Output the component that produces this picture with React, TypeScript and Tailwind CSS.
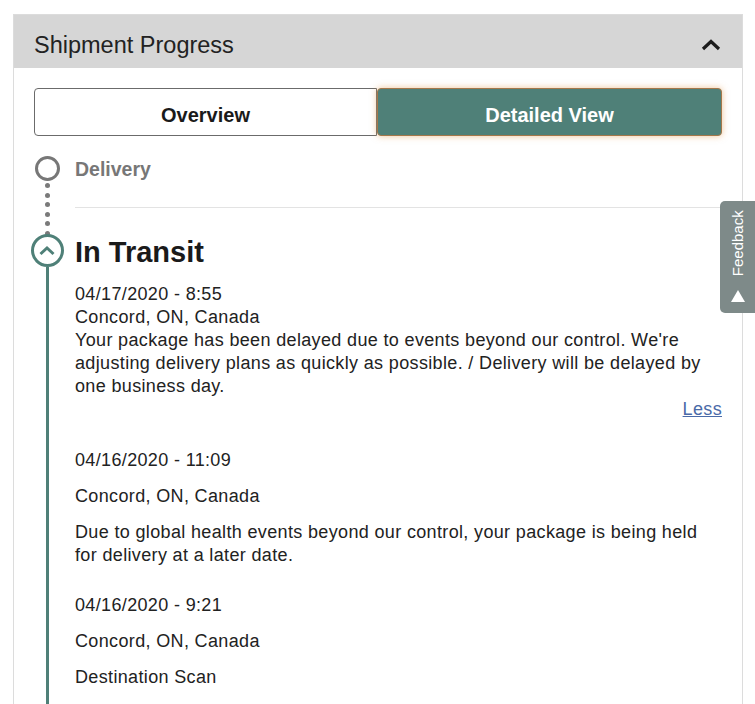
import React from "react";

const font = { fontFamily: '"Liberation Sans", Arial, sans-serif' };

function Dots() {
  return (
    <div className="flex flex-col items-center gap-[4.5px] pt-[2px]">
      {[0, 1, 2, 3, 4, 5, 6].map((i) => (
        <div key={i} className="w-[5px] h-[5px] rounded-full bg-[#7a7a7a]" />
      ))}
    </div>
  );
}

export default function App() {
  return (
    <div className="relative w-[755px] h-[704px] bg-white overflow-hidden text-[#222]" style={font}>
      <div className="ml-[13px] mt-[14px] w-[730px] h-[700px] border border-[#dcdcdc]">
        {/* Header */}
        <div className="h-[53px] bg-[#d6d6d6] flex items-center justify-between pl-[20px] pr-[20px] pt-[6px]">
          <span className="text-[23.5px] leading-[28px] text-[#222]">Shipment Progress</span>
          <svg width="20" height="13" viewBox="0 0 20 13" className="mr-[1px]">
            <path d="M2 11 L10 3.5 L18 11" fill="none" stroke="#1c1c1c" strokeWidth="3.2" />
          </svg>
        </div>

        {/* Body */}
        <div className="pl-[20px] pr-[20px] pt-[20px]">
          {/* Toggle */}
          <div className="flex h-[48px]">
            <div className="w-[343px] flex items-center justify-center border border-[#6b6b6b] rounded-l-[4px] bg-white pt-[6px]">
              <span className="text-[20px] font-bold text-[#1a1a1a]">Overview</span>
            </div>
            <div className="flex-1 flex items-center justify-center bg-[#4f8078] rounded-[4px] border border-[#a5784a] shadow-[0_0_7px_rgba(225,150,70,0.55)] pt-[6px]">
              <span className="text-[20px] font-bold text-white">Detailed View</span>
            </div>
          </div>

          {/* Timeline */}
          <div className="mt-[20px]">
            {/* Delivery row */}
            <div className="flex">
              <div className="w-[26px] h-[78px] flex flex-col items-center">
                <div className="w-[25px] h-[25px] shrink-0 rounded-full border-[3px] border-[#777]" />
                <Dots />
              </div>
              <div className="flex-1 ml-[15px]">
                <div className="h-[25px] flex items-center pt-[2px]">
                  <span className="text-[19.5px] font-bold text-[#777]">Delivery</span>
                </div>
                <div className="mt-[26px] border-t border-[#e3e3e3]" />
              </div>
            </div>

            {/* In Transit row */}
            <div className="flex">
              <div className="w-[26px] flex flex-col items-center">
                <div className="w-[33px] h-[33px] shrink-0 rounded-full border-[3px] border-[#4f8078] flex items-center justify-center bg-white">
                  <svg width="18" height="11" viewBox="0 0 18 11">
                    <path d="M2.5 9 L9 3 L15.5 9" fill="none" stroke="#4f8078" strokeWidth="3" />
                  </svg>
                </div>
                <div className="w-[3px] flex-1 bg-[#4f8078]" />
              </div>
              <div className="flex-1 ml-[15px] pb-[60px]">
                <div className="text-[29px] leading-[36px] font-bold text-[#1a1a1a]">In Transit</div>
                <div className="mt-[13px] text-[18px] leading-[23px] tracking-[0.35px]">
                  <p>04/17/2020 - 8:55</p>
                  <p>Concord, ON, Canada</p>
                  <p>
                    Your package has been delayed due to events beyond our control. We're adjusting delivery
                    plans as quickly as possible. / Delivery will be delayed by one business day.
                  </p>
                  <div className="flex justify-end">
                    <a className="underline text-[#4a6aa8] cursor-pointer">Less</a>
                  </div>
                </div>

                <div className="mt-[28px] text-[18px] leading-[23px] tracking-[0.35px] flex flex-col gap-[13px]">
                  <p>04/16/2020 - 11:09</p>
                  <p>Concord, ON, Canada</p>
                  <p>
                    Due to global health events beyond our control, your package is being held for delivery at a
                    later date.
                  </p>
                </div>

                <div className="mt-[27px] text-[18px] leading-[23px] tracking-[0.35px] flex flex-col gap-[13px]">
                  <p>04/16/2020 - 9:21</p>
                  <p>Concord, ON, Canada</p>
                  <p>Destination Scan</p>
                </div>
              </div>
            </div>
          </div>
        </div>
      </div>

      {/* Feedback tab */}
      <div className="absolute left-[720px] top-[201px] w-[36px] h-[112px] bg-[#7e8a89] rounded-l-[5px] flex flex-col items-center pt-[6px]">
        <div className="h-[72px] w-[20px] flex items-center justify-center">
          <span className="-rotate-90 text-[15px] text-white whitespace-nowrap" style={{ fontFamily: '"Liberation Sans", Arial, sans-serif' }}>
            Feedback
          </span>
        </div>
        <svg width="16" height="14" viewBox="0 0 16 14" className="mt-[10px]">
          <path d="M8 1 L15 13 L1 13 Z" fill="white" />
        </svg>
      </div>
    </div>
  );
}
